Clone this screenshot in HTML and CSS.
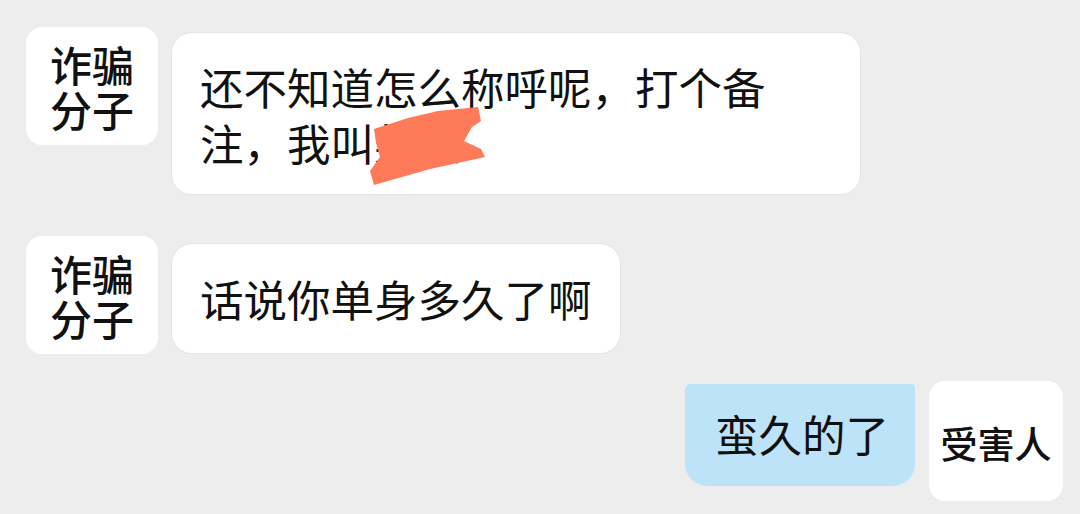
FILE: index.html
```html
<!DOCTYPE html>
<html>
	<head>
		<meta charset="UTF-8">
		<title>聊天记录</title>
		<link rel="stylesheet" href="styles.css">
	</head>
	<body>
		<div class="chat">
			<div class="row rowFirst">
				<div class="avatar">诈骗<br>分子</div>
				<div class="bubble bubbleLong">
					还不知道怎么称呼呢，打个备注，我叫<span class="hidden">某某</span>
					<svg class="scribble" width="130" height="90" viewBox="0 0 130 90">
						<polygon fill="#ff7a59" points="6,24 40,13 70,6 110,2 113,16 104,22 96,36 113,44 117,52 62,64 6,80 2,66 12,52 8,38"/>
					</svg>
				</div>
			</div>
			<div class="row rowSecond">
				<div class="avatar">诈骗<br>分子</div>
				<div class="bubble bubbleShort">话说你单身多久了啊</div>
			</div>
			<div class="row rowMine">
				<div class="bubble bubbleMine">蛮久的了</div>
				<div class="avatar avatarMine">受害人</div>
			</div>
		</div>
	</body>
</html>
```

FILE: styles.css
```css
body{
	margin: 0;
	background-color: #ededed;
	font-family: "Noto Sans CJK SC", "Noto Sans", sans-serif;
	color: #111;
}
.chat{
	display: flex;
	flex-direction: column;
	padding: 27px 17px 0 26px;
}
.row{
	display: flex;
	align-items: flex-start;
	gap: 14px;
}
.rowSecond{
	margin-top: 42px;
}
.rowMine{
	margin-top: 27px;
	justify-content: flex-end;
}
.avatar{
	width: 132px;
	height: 118px;
	background-color: white;
	border-radius: 16px;
	display: flex;
	align-items: center;
	justify-content: center;
	text-align: center;
	font-size: 42px;
	font-weight: 500;
	line-height: 45px;
}
.avatarMine{
	width: 134px;
	height: 120px;
	font-size: 37px;
	padding-top: 4px;
	box-sizing: border-box;
	white-space: nowrap;
}
.bubble{
	background-color: white;
	border-radius: 20px;
	font-size: 43.5px;
	line-height: 56px;
	box-shadow: 0 0 0 1px #e4e4e4;
	box-sizing: border-box;
}
.bubbleLong{
	position: relative;
	width: 688px;
	height: 161px;
	margin-top: 6px;
	padding: 26px 80px 0 28px;
}
.bubbleShort{
	width: 448px;
	height: 109px;
	margin-top: 8px;
	padding: 27px 0 0 28px;
	white-space: nowrap;
}
.bubbleMine{
	width: 230px;
	height: 102px;
	margin-top: 3px;
	padding: 22px 0 0 30px;
	background-color: #bde3f8;
	box-shadow: none;
	border-radius: 6px 4px 22px 22px;
	white-space: nowrap;
}
.hidden{
	color: #222;
}
.scribble{
	position: absolute;
	left: 196px;
	top: 72px;
}
```
